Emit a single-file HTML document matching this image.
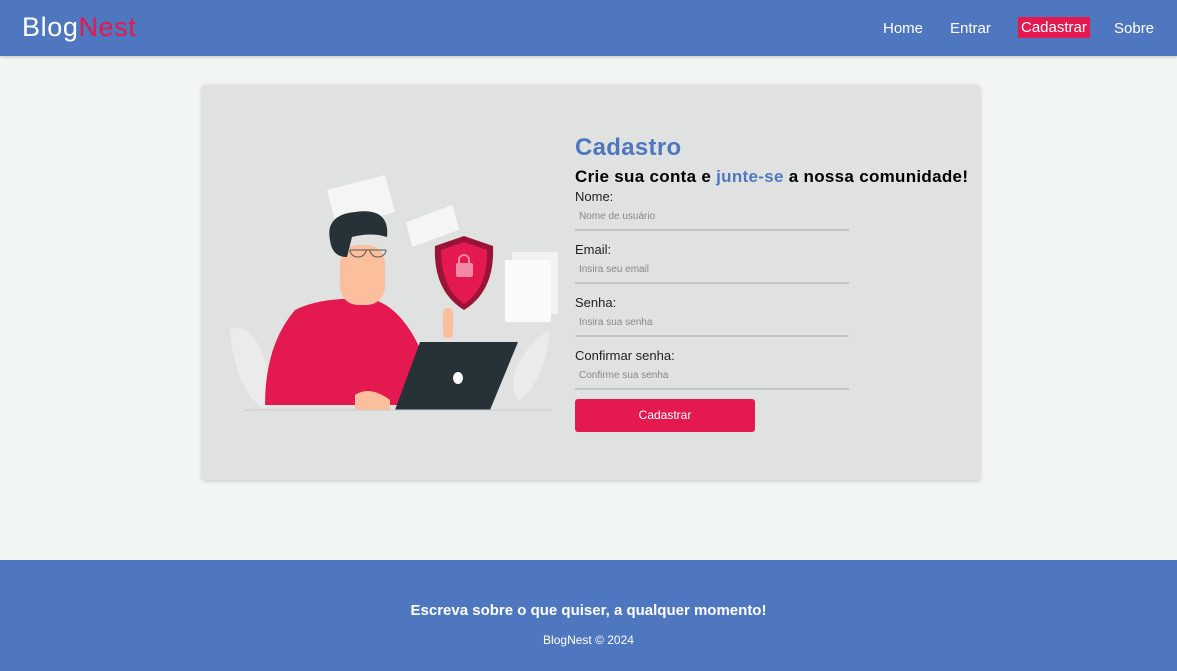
<!DOCTYPE html>
<html><head><meta charset="utf-8"><style>
*{margin:0;padding:0;box-sizing:border-box}
body{width:1177px;height:671px;background:#f1f6f2;font-family:"Liberation Sans",sans-serif;position:relative;overflow:hidden}
header{position:absolute;left:0;top:0;width:1177px;height:56px;background:#4f77bf;box-shadow:0 1px 3px rgba(0,0,0,.2)}
.logo{position:absolute;left:22px;top:12px;font-size:27px;color:#fff;letter-spacing:0.6px}
.logo span{color:#e3194f}
nav a{position:absolute;top:20px;color:#fff;font-size:15px;text-decoration:none}
.card{position:absolute;left:202px;top:85px;width:778px;height:395px;background:#e0e2e1;border-radius:3px;box-shadow:0 1px 4px rgba(0,0,0,.2)}
.t{position:absolute;white-space:nowrap}
.lbl{font-size:13px;color:#222}
.ph{font-size:10px;color:#888}
.line{position:absolute;left:575px;width:274px;height:2px;background:#c4c6c5}
.btn{position:absolute;left:575px;top:399px;width:180px;height:33px;background:#e3194f;border-radius:3px;color:#fff;font-size:12px;text-align:center;line-height:33px}
footer{position:absolute;left:0;top:560px;width:1177px;height:111px;background:#4f77bf;color:#fff;text-align:center}
</style></head><body>
<header>
<div class="logo">Blog<span>Nest</span></div>
<nav>
<a style="left:883px">Home</a>
<a style="left:950px">Entrar</a>
<a style="left:1018px;top:17px;background:#e3194f;padding:2px 3px">Cadastrar</a>
<a style="left:1114px">Sobre</a>
</nav>
</header>
<div class="card"></div>
<svg style="position:absolute;left:0;top:0" width="1177" height="671">
<path d="M230 330 q20 -10 35 30 q10 30 0 50 q-30 -20 -35 -80z" fill="#eaebea"/>
<path d="M550 330 q-20 10 -35 40 q-5 25 5 30 q25 -20 30 -70z" fill="#eaebea"/>
<polygon points="327,190 385,175 395,212 337,228" fill="#f5f5f5"/>
<polygon points="405,222 453,204 460,230 412,248" fill="#f5f5f5" stroke="#ddd"/>
<rect x="512" y="252" width="46" height="62" fill="#f2f2f2"/>
<rect x="505" y="260" width="46" height="62" fill="#fafafa"/>
<path d="M464 236 l29 10 q2 45 -29 64 q-31 -19 -29 -64z" fill="#9b1438"/>
<path d="M464 242 l23 8 q1 38 -23 54 q-23 -16 -23 -54z" fill="#e3194f"/>
<rect x="456" y="263" width="17" height="14" rx="2" fill="#f28aa6"/>
<path d="M459 264 v-4 a5 5 0 0 1 10 0 v4" stroke="#f28aa6" stroke-width="2" fill="none"/>
<path d="M265 405 q0 -60 30 -95 q30 -15 80 -10 q30 10 50 60 l-20 45z" fill="#e3194f"/>
<rect x="340" y="245" width="45" height="60" rx="18" fill="#fbbf9e"/>
<path d="M330 240 q-5 -25 25 -28 q35 -5 32 25 q-15 -5 -35 0 l-5 20 q-15 0 -17 -17z" fill="#263238"/>
<path d="M350 250 h36 M350 250 a8 7 0 1 0 16 0 M370 250 a8 7 0 1 0 16 0" stroke="#555" fill="none"/>
<rect x="443" y="308" width="10" height="30" rx="4" fill="#fbbf9e"/>
<polygon points="420,342 518,342 490,410 395,410" fill="#263238"/>
<ellipse cx="458" cy="378" rx="5" ry="6" fill="#fff"/>
<path d="M355 395 q15 -10 35 5 v10 h-35z" fill="#fbbf9e"/>
<line x1="245" y1="410" x2="552" y2="410" stroke="#c8c8c8"/>
</svg>
<div class="t" style="left:575px;top:134px;font-size:24px;font-weight:bold;color:#4f77bf;letter-spacing:0.3px">Cadastro</div>
<div class="t" style="left:575px;top:167px;font-size:17px;font-weight:bold;color:#000;letter-spacing:0.3px">Crie sua conta e <span style="color:#4f77bf">junte-se</span> a nossa comunidade!</div>
<div class="t lbl" style="left:575px;top:189px">Nome:</div>
<div class="t ph" style="left:579px;top:211px">Nome de usuário</div>
<div class="line" style="top:229px"></div>
<div class="t lbl" style="left:575px;top:242px">Email:</div>
<div class="t ph" style="left:579px;top:264px">Insira seu email</div>
<div class="line" style="top:282px"></div>
<div class="t lbl" style="left:575px;top:295px">Senha:</div>
<div class="t ph" style="left:579px;top:317px">Insira sua senha</div>
<div class="line" style="top:335px"></div>
<div class="t lbl" style="left:575px;top:348px">Confirmar senha:</div>
<div class="t ph" style="left:579px;top:370px">Confirme sua senha</div>
<div class="line" style="top:388px"></div>
<div class="btn">Cadastrar</div>
<footer>
<div style="position:absolute;width:100%;top:42px;font-size:15px;font-weight:bold">Escreva sobre o que quiser, a qualquer momento!</div>
<div style="position:absolute;width:100%;top:73px;font-size:12px">BlogNest © 2024</div>
</footer>
</body></html>
